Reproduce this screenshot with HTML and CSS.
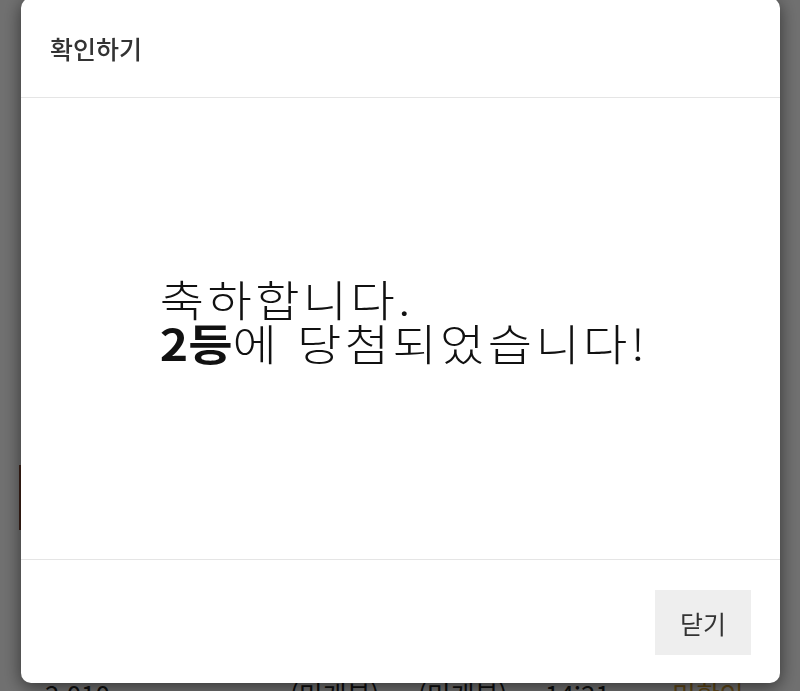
FILE: index.html
```html
<!DOCTYPE html>
<html lang="ko">
<head>
<meta charset="utf-8">
<title>확인하기</title>
<link rel="stylesheet" href="styles.css">
</head>
<body>
<div class="page">
  <div class="page-fill">
    <div class="side-btn"></div>
  </div>
  <div class="row">
    <span class="c c-num">2,010</span>
    <span class="c c-a">(미개봉)</span>
    <span class="c c-b">(미개봉)</span>
    <span class="c c-time">14:21</span>
    <span class="c c-state">미확인</span>
  </div>
</div>
<div class="overlay"></div>
<div class="modal">
  <div class="modal-header">
    <h4 class="modal-title">확인하기</h4>
  </div>
  <div class="modal-body">
    <p class="msg"><span class="line">축하합니다.</span><span class="line"><b>2등</b>에 당첨되었습니다!</span></p>
  </div>
  <div class="modal-footer">
    <button class="btn-close" type="button">닫기</button>
  </div>
</div>
</body>
</html>
```

FILE: styles.css
```css
html, body {
  margin: 0;
  padding: 0;
  height: 100%;
  overflow: hidden;
}
body {
  font-family: "Noto Sans CJK KR", "Noto Sans", sans-serif;
  background: #ffffff;
  color: #222;
}
.page {
  display: flex;
  flex-direction: column;
}
.page-fill {
  height: 681px;
  display: flex;
  flex-direction: column;
}
.side-btn {
  margin-top: 465px;
  margin-left: 19px;
  width: 40px;
  height: 65px;
  background: #8a4a35;
}
.row {
  display: flex;
  height: 40px;
  font-size: 26px;
  line-height: 26px;
}
.c { display: block; white-space: nowrap; }
.c-num { margin-left: 45px; width: 245px; }
.c-a { width: 128px; }
.c-b { width: 127px; }
.c-time { width: 127px; }
.c-state { color: #d9a030; }

.overlay {
  position: fixed;
  inset: 0;
  background: rgba(0, 0, 0, 0.56);
}
.modal {
  position: fixed;
  left: 21px;
  top: -2px;
  width: 759px;
  background: #fff;
  border-radius: 10px;
  box-shadow: 0 4px 18px rgba(0, 0, 0, 0.55);
  display: flex;
  flex-direction: column;
}
.modal-header {
  height: 100px;
  box-sizing: border-box;
  border-bottom: 1px solid #e5e5e5;
  padding: 0 29px;
  display: flex;
  align-items: center;
}
.modal-title {
  margin: 0;
  font-size: 25px;
  font-weight: 500;
  color: #333;
}
.modal-body {
  height: 461px;
  display: flex;
  align-items: center;
  justify-content: center;
  padding-bottom: 18px;
  padding-left: 8px;
  box-sizing: border-box;
}
.msg {
  margin: 0;
  font-size: 43px;
  line-height: 44px;
  letter-spacing: 3px;
  font-weight: 300;
  color: #111;
  display: flex;
  flex-direction: column;
  align-items: flex-start;
  transform: scaleX(1.12);
}
.msg b { font-weight: 700; letter-spacing: 0; }
.modal-footer {
  border-top: 1px solid #e5e5e5;
  padding: 30px 29px 28px;
  display: flex;
  justify-content: flex-end;
}
.btn-close {
  width: 96px;
  height: 65px;
  border: none;
  background: #eeeeee;
  color: #333;
  font-family: inherit;
  font-size: 25px;
  padding: 0;
  border-radius: 0;
}
```
